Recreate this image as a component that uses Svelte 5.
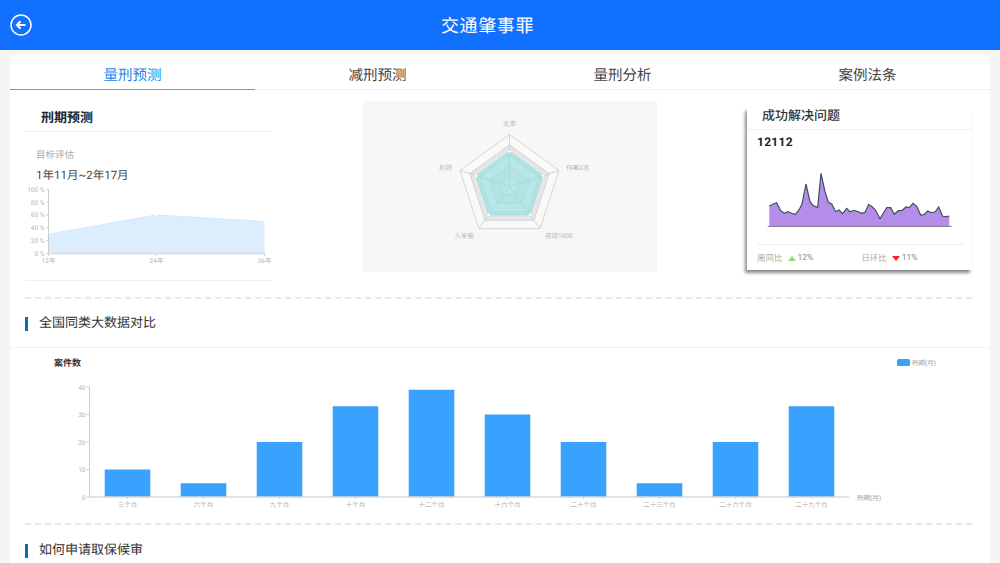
<script>
	const tabs = ['量刑预测', '减刑预测', '量刑分析', '案例法条'];
	const activeTab = 0;

	// left area chart
	const percentTicks = [0, 20, 40, 60, 80, 100];
	const areaPoints = [
		{ label: '12年', x: 48.5, y: 30 },
		{ label: '24年', x: 156.5, y: 60 },
		{ label: '36年', x: 264.5, y: 50 }
	];
	const py = (v) => 253.5 - v * 0.642;
	const areaLine = areaPoints.map((p) => `${p.x - 25},${py(p.y) - 185}`).join(' ');

	// radar
	const cx = 146.5;
	const cy = 85.5;
	const angle = (i) => -Math.PI / 2 + (i * 2 * Math.PI) / 5;
	function pentagon(r) {
		return [0, 1, 2, 3, 4]
			.map((i) => `${(cx + r * Math.cos(angle(i))).toFixed(1)},${(cy + r * Math.sin(angle(i))).toFixed(1)}`)
			.join(' ');
	}
	const spokes = [0, 1, 2, 3, 4].map((i) => ({ x: cx + 52 * Math.cos(angle(i)), y: cy + 52 * Math.sin(angle(i)) }));
	const dots = [0, 1, 2, 3, 4].map((i) => ({ x: cx + 35 * Math.cos(angle(i)), y: cy + 35 * Math.sin(angle(i)) }));
	const radarLabels = [
		{ text: '北京', x: 146.5, y: 25, anchor: 'middle' },
		{ text: '作案2次', x: 203, y: 69, anchor: 'start' },
		{ text: '盗窃1000', x: 182, y: 136.5, anchor: 'start' },
		{ text: '入室偷', x: 111, y: 136.5, anchor: 'end' },
		{ text: '扒窃', x: 89, y: 69, anchor: 'end' }
	];

	// sparkline, traced from the reference
	const spark = [
		[58, 138], [70, 132], [80, 128], [92, 152], [103, 160], [113, 155], [125, 160], [136, 163],
		[147, 150], [156, 132], [168, 72], [180, 125], [190, 137], [203, 142], [213, 40], [225, 95],
		[235, 127], [245, 132], [257, 155], [267, 150], [278, 161], [290, 145], [300, 155], [312, 151],
		[325, 155], [335, 160], [345, 157], [356, 133], [368, 142], [378, 153], [390, 176], [400, 160],
		[410, 143], [422, 143], [433, 163], [445, 152], [457, 151], [468, 141], [478, 143], [489, 130],
		[500, 139], [512, 165], [522, 164], [533, 153], [544, 158], [555, 156], [566, 141], [578, 169],
		[588, 170], [598, 168]
	];
	const sparkLine = spark.map((p) => `${(p[0] / 3).toFixed(1)},${(p[1] / 3).toFixed(1)}`).join(' ');
	const sparkArea = `${58 / 3},66.3 ${sparkLine} ${598 / 3},66.3`;

	// bar chart
	const bars = [
		{ label: '三个月', value: 10 },
		{ label: '六个月', value: 5 },
		{ label: '九个月', value: 20 },
		{ label: '十个月', value: 33 },
		{ label: '十二个月', value: 39 },
		{ label: '十六个月', value: 30 },
		{ label: '二十个月', value: 20 },
		{ label: '二十三个月', value: 5 },
		{ label: '二十六个月', value: 20 },
		{ label: '二十九个月', value: 33 }
	];
	const barTicks = [0, 10, 20, 30, 40];
	const barBase = 149;
	const barScale = 2.75;
	const barLeft = 79.5;
</script>

<div class="page">
	<header class="topbar">
		<button type="button" class="back" aria-label="返回">
			<svg width="22" height="22" viewBox="0 0 22 22" fill="none" stroke="#fff">
				<circle cx="11" cy="11" r="10" stroke-width="1.5" />
				<path d="M15.5 11H7M10.5 7.3 6.9 11l3.6 3.7" stroke-width="2" />
			</svg>
		</button>
		<h1>交通肇事罪</h1>
	</header>

	<main class="card">
		<nav class="tabs">
			{#each tabs as tab, i}
				<div class="tab" class:active={i === activeTab}>{tab}</div>
			{/each}
		</nav>

		<section class="overview">
			<div class="predict">
				<h2>刑期预测</h2>
				<div class="predict-body">
					<p class="muted">目标评估</p>
					<p class="range">1年11月~2年17月</p>
					<svg class="area-chart" width="247" height="82" viewBox="0 0 247 82">
						<polygon points="23.5,68.5 {areaLine} 239.5,68.5" fill="#dcedfe" />
						<polyline points={areaLine} fill="none" stroke="#d3e8fd" />
						{#each areaPoints as p}
							<circle cx={p.x - 25} cy={py(p.y) - 185} r="1.2" fill="#fff" />
							<line x1={p.x - 25} x2={p.x - 25} y1="68.5" y2="71" stroke="#ccc" />
							<text x={p.x - 25} y="78" text-anchor="middle" class="tick">{p.label}</text>
						{/each}
						<line x1="23.5" x2="23.5" y1="4" y2="68.5" stroke="#ccc" />
						<line x1="23.5" x2="239.5" y1="68.5" y2="68.5" stroke="#d6d9de" stroke-width="1.5" />
						{#each percentTicks as t}
							<line x1="21" x2="23.5" y1={py(t) - 185} y2={py(t) - 185} stroke="#ccc" />
							<text x="19.5" y={py(t) - 182.5} text-anchor="end" class="tick">{t} %</text>
						{/each}
					</svg>
				</div>
			</div>

			<div class="radar">
				<svg width="294" height="171" viewBox="0 0 294 171">
					<polygon points={pentagon(52)} fill="#f9f9f9" stroke="#d4d4d4" />
					<polygon points={pentagon(41.6)} fill="#e6e6e6" stroke="#d4d4d4" />
					<polygon points={pentagon(31.2)} fill="#eeeeee" stroke="#d8d8d8" />
					<polygon points={pentagon(20.8)} fill="#e6e6e6" stroke="#d8d8d8" />
					<polygon points={pentagon(10.4)} fill="#eeeeee" stroke="#d8d8d8" />
					{#each spokes as s}
						<line x1={cx} y1={cy} x2={s.x} y2={s.y} stroke="#d4d4d4" />
					{/each}
					<polygon points={pentagon(35)} fill="#7fe0e0" fill-opacity="0.5" stroke="#93e2e2" />
					{#each dots as d}
						<circle cx={d.x} cy={d.y} r="1.2" fill="#fff" />
					{/each}
					{#each radarLabels as l}
						<text x={l.x} y={l.y} text-anchor={l.anchor} class="radar-label">{l.text}</text>
					{/each}
				</svg>
			</div>

			<div class="solved">
				<h2>成功解决问题</h2>
				<div class="solved-body">
					<strong>12112</strong>
					<svg class="spark" width="210" height="80" viewBox="0 0 210 80">
						<polygon points={sparkArea} fill="#b48de8" />
						<polyline points={sparkLine} fill="none" stroke="#434e60" stroke-width="1.2" />
						<line x1="17.7" x2="201.7" y1="66.4" y2="66.4" stroke="#7b7b86" />
					</svg>
					<div class="stats">
						<span class="stat">周同比<i class="up"></i><em>12%</em></span>
						<span class="stat">日环比<i class="down"></i><em>11%</em></span>
					</div>
				</div>
			</div>
		</section>

		<div class="dashed"></div>

		<div class="section-title"><span>全国同类大数据对比</span></div>

		<section class="compare">
			<svg width="980" height="175" viewBox="0 0 980 175">
				<text x="44" y="18" class="bar-title">案件数</text>
				<rect x="887" y="11" width="13" height="7" rx="1.5" fill="#3ba1ff" />
				<text x="902" y="17" class="bar-note">刑期(月)</text>

				{#each bars as bar, i}
					<rect
						x={barLeft + 76 * i + 15.2}
						y={barBase - bar.value * barScale}
						width="45.6"
						height={bar.value * barScale}
						fill="#3ba1ff"
					/>
					<line x1={barLeft + 76 * i + 38} x2={barLeft + 76 * i + 38} y1={barBase} y2={barBase + 2} stroke="#ccc" />
					<text x={barLeft + 76 * i + 38} y={barBase + 10} text-anchor="middle" class="tick">{bar.label}</text>
				{/each}

				<line x1={barLeft} x2={barLeft} y1="39" y2={barBase} stroke="#ccc" />
				<line x1={barLeft} x2="839" y1={barBase} y2={barBase} stroke="#d8d8d8" stroke-width="1.5" />
				{#each barTicks as t}
					<line x1={barLeft - 3} x2={barLeft} y1={barBase - t * barScale} y2={barBase - t * barScale} stroke="#ccc" />
					<text x={barLeft - 4} y={barBase - t * barScale + 2.5} text-anchor="end" class="tick">{t}</text>
				{/each}
				<text x="847" y={barBase + 2.5} class="bar-note">刑期(月)</text>
			</svg>
		</section>

		<div class="dashed"></div>

		<div class="section-title last"><span>如何申请取保候审</span></div>
	</main>
</div>

<style>
	:global(body) {
		margin: 0;
		background: #f5f5f5;
	}

	.page {
		height: 563px;
		overflow: hidden;
		background: #f5f5f5;
		font-family: Roboto, "Noto Sans CJK SC", sans-serif;
		color: #333;
		text-rendering: geometricPrecision;
	}

	.topbar {
		display: flex;
		align-items: center;
		height: 50px;
		padding-left: 10px;
		background: #1270ff;
	}

	.back {
		display: flex;
		padding: 0;
		border: none;
		background: none;
	}

	.topbar h1 {
		flex: 1;
		margin: 0 0 0 -9px;
		padding-right: 48px;
		color: #fff;
		font-size: 18px;
		font-weight: 400;
		letter-spacing: 0.6px;
		text-align: center;
	}

	.card {
		margin: 5px 10px 0;
		height: 600px;
		background: #fff;
		border-radius: 5px 5px 0 0;
	}

	.tabs {
		display: flex;
		height: 35px;
		border-bottom: 1px solid #f0f0f0;
		box-sizing: border-box;
	}

	.tab {
		box-sizing: border-box;
		width: 245px;
		height: 35px;
		padding-top: 9px;
		font-size: 14.5px;
		line-height: 24px;
		text-align: center;
		color: #444;
	}

	.tab.active {
		color: #1a85e8;
		border-bottom: 1px solid #5a9fe0;
	}

	.overview {
		display: flex;
		justify-content: space-between;
		align-items: flex-start;
		height: 207px;
		padding: 0 18px 0 15px;
	}

	.predict {
		width: 247px;
		height: 190px;
		border-bottom: 1px solid #eee;
	}

	.predict h2 {
		margin: 0;
		height: 42px;
		padding-left: 16px;
		box-sizing: border-box;
		border-bottom: 1px solid #f0f0f0;
		font-size: 13px;
		line-height: 58px;
		font-weight: 700;
		color: #222;
	}

	.predict-body {
		padding-top: 16px;
	}

	.muted {
		margin: 0;
		padding-left: 11px;
		font-size: 9.5px;
		line-height: 16px;
		color: #aaa;
	}

	.range {
		margin: 2px 0 0;
		padding-left: 11px;
		font-size: 11.5px;
		line-height: 18px;
		color: #444;
	}

	.area-chart {
		display: block;
		margin-top: 1px;
	}

	.tick {
		font-size: 6.5px;
		fill: #b5b5b5;
	}

	.radar {
		width: 294px;
		height: 171px;
		margin-top: 11px;
		background: #f7f7f7;
	}

	.radar svg {
		display: block;
	}

	.radar-label {
		font-size: 6.5px;
		fill: #b5b5b5;
	}

	.solved {
		box-sizing: border-box;
		width: 225px;
		height: 162px;
		margin-top: 18px;
		background: #fff;
		box-shadow: -2px 3px 3px rgba(0, 0, 0, 0.45);
	}

	.solved h2 {
		margin: 0;
		height: 21px;
		padding-left: 15px;
		border-bottom: 1px solid #f0f0f0;
		font-size: 13px;
		line-height: 18px;
		font-weight: 500;
		color: #333;
	}

	.solved-body {
		padding: 6px 8px 0 10px;
	}

	.solved-body strong {
		display: block;
		font-size: 12px;
		line-height: 13px;
		color: #222;
		letter-spacing: 0.3px;
	}

	.spark {
		display: block;
		margin: 11px 0 0 -7px;
	}

	.stats {
		display: flex;
		gap: 48px;
		height: 26px;
		margin-top: 4px;
		border-top: 1px solid #eee;
		align-items: center;
		font-size: 8.5px;
		color: #aaa;
	}

	.stat {
		display: flex;
		align-items: center;
	}

	.stat em {
		font-style: normal;
		color: #888;
		margin-left: 2px;
	}

	.up,
	.down {
		width: 0;
		height: 0;
		margin-left: 5px;
		border-left: 4px solid transparent;
		border-right: 4px solid transparent;
	}

	.up {
		border-bottom: 5px solid #8fd86e;
	}

	.down {
		border-top: 5px solid #f5222d;
	}

	.dashed {
		height: 0;
		margin: 0 18px 0 15px;
		border-top: 2px dashed #e8e8e8;
	}

	.section-title {
		display: flex;
		align-items: center;
		height: 49px;
		padding: 2px 0 0 15px;
		border-bottom: 1px solid #f2f2f2;
		box-sizing: border-box;
	}

	.section-title span {
		padding-left: 11px;
		border-left: 3px solid #0a6fad;
		font-size: 13px;
		line-height: 14px;
		color: #333;
	}

	.section-title.last {
		border-bottom: none;
	}

	.compare svg {
		display: block;
	}

	.bar-title {
		font-size: 9px;
		font-weight: 700;
		fill: #333;
	}

	.bar-note {
		font-size: 6.5px;
		fill: #999;
	}
</style>
